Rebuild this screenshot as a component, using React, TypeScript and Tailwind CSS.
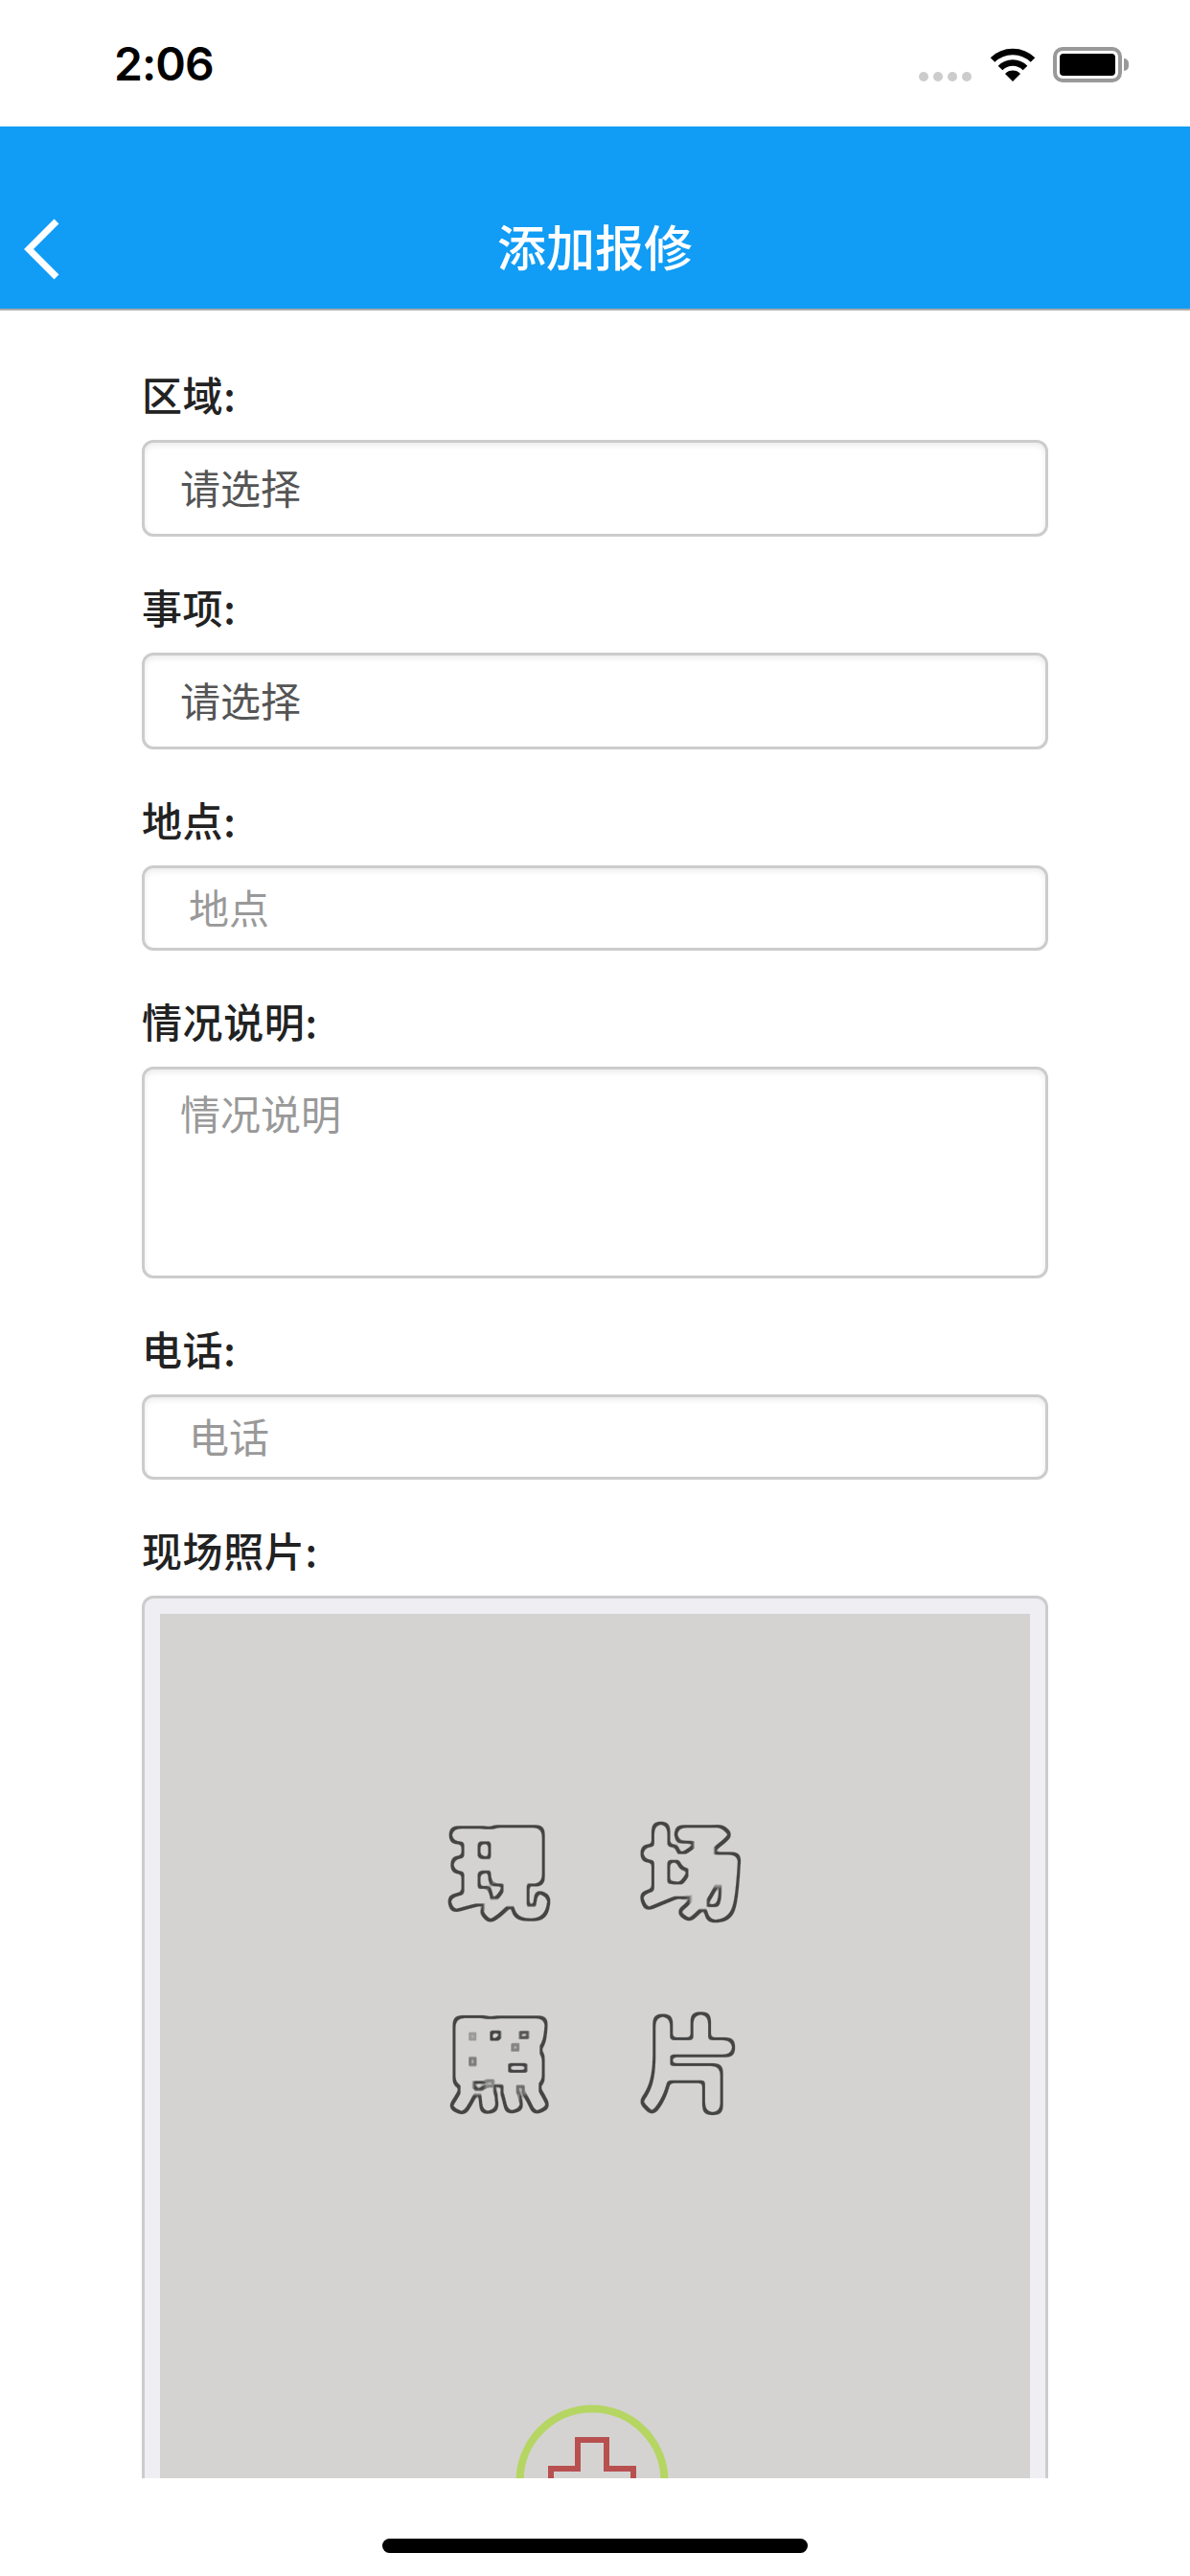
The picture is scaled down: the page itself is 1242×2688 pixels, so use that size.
import React from 'react'

const cjk = "font-['Noto_Sans_CJK_SC',sans-serif]"

function StatusBar() {
  return (
    <div className="h-[132px] flex items-start justify-between pl-[119px] pr-[64px] pt-[38px]">
      <span className="font-['Inter',sans-serif] text-[48px] leading-[58px] font-semibold text-black tracking-[-1px]">2:06</span>
      <div className="flex items-start pt-[11px]">
        <div className="flex gap-[5px] mt-[26px] mr-[19px]">
          <span className="w-[10px] h-[10px] rounded-full bg-[#cccccc]" />
          <span className="w-[10px] h-[10px] rounded-full bg-[#cccccc]" />
          <span className="w-[10px] h-[10px] rounded-full bg-[#cccccc]" />
          <span className="w-[10px] h-[10px] rounded-full bg-[#cccccc]" />
        </div>
        <svg width="48" height="36" viewBox="0 0 48 36" className="mr-[18px]">
          <path d="M3 13.5 A30 30 0 0 1 45 13.5" fill="none" stroke="#000" strokeWidth="6.5" />
          <path d="M11 22 A18 18 0 0 1 37 22" fill="none" stroke="#000" strokeWidth="6.5" />
          <path d="M16 28 A11 11 0 0 1 32 28 L24 36 Z" fill="#000" />
        </svg>
        <div className="w-[72px] h-[37px] rounded-[10px] border-[4px] border-[#999999] p-[3px]">
          <div className="w-full h-full rounded-[4px] bg-black" />
        </div>
        <div className="w-[5px] h-[13px] mt-[12px] ml-[2px] rounded-r-full bg-[#999999]" />
      </div>
    </div>
  )
}

function Header() {
  return (
    <div className="relative h-[192px] bg-[#119cf5] border-b-[2px] border-[#aaaaaa] flex items-end justify-center pb-[36px]">
      <svg width="40" height="64" viewBox="0 0 40 64" className="absolute left-[23px] top-[96px]">
        <path d="M36 3 L7 32 L36 61" fill="none" stroke="#fff" strokeWidth="7" />
      </svg>
      <h1 className={`${cjk} text-[51px] leading-[60px] font-medium text-white`}>添加报修</h1>
    </div>
  )
}

function Label({ text }: { text: string }) {
  return (
    <div className="h-[121px] flex items-end pb-[23px]">
      <span className={`${cjk} text-[42px] leading-[50px] font-medium tracking-[0.6px] text-[#222222]`}>{text}</span>
    </div>
  )
}

const boxClass = 'w-full border-[3px] border-[#cccccc] rounded-[12px] bg-white shadow-[inset_0_3px_6px_rgba(0,0,0,0.08)]'

function SelectField({ label }: { label: string }) {
  return (
    <div>
      <Label text={label} />
      <div className={`${boxClass} ${cjk} h-[101px] flex items-center pl-[37px] pb-[4px] text-[42px] text-[#555555]`}>请选择</div>
    </div>
  )
}

function TextField({ label, placeholder }: { label: string; placeholder: string }) {
  return (
    <div>
      <Label text={label} />
      <input
        placeholder={placeholder}
        className={`${boxClass} ${cjk} h-[89px] block pl-[46px] pb-[4px] text-[42px] placeholder:text-[#999999] outline-none`}
      />
    </div>
  )
}

function PhotoBox() {
  return (
    <div>
      <Label text="现场照片:" />
      <div className="border-[3px] border-[#cccccc] rounded-[12px] bg-[#eeeef3] p-[16px] pb-0">
        <div className="h-[1200px] bg-[#d4d3d2] flex flex-col items-center pt-[163px]">
          <svg width="0" height="0" className="absolute">
            <filter id="bubble" x="-25%" y="-25%" width="150%" height="150%" colorInterpolationFilters="sRGB">
              <feGaussianBlur in="SourceAlpha" stdDeviation="3" result="soft" />
              <feComponentTransfer in="soft" result="outer">
                <feFuncA type="linear" slope="14" intercept="-1.2" />
              </feComponentTransfer>
              <feMorphology in="outer" operator="erode" radius="3" result="inner" />
              <feComposite in="outer" in2="inner" operator="out" result="ring" />
              <feFlood floodColor="#444444" />
              <feComposite in2="ring" operator="in" />
            </filter>
          </svg>
          <div className={`${cjk} grid grid-cols-[200px_200px] auto-rows-[200px] place-items-center text-[106px] leading-none font-bold text-[#444444] [filter:url(#bubble)]`}>
            <span>现</span>
            <span>场</span>
            <span>照</span>
            <span>片</span>
          </div>
          <svg width="160" height="160" viewBox="0 0 160 160" className="mt-[262px] mr-[6px] shrink-0">
            <circle cx="80" cy="80" r="75.5" fill="none" stroke="#b5d662" strokeWidth="8" />
            <path d="M65 67 V37 H95 V67 H123 V93 H95 V123 H65 V93 H37 V67 Z" fill="none" stroke="#b85050" strokeWidth="6" />
          </svg>
        </div>
      </div>
    </div>
  )
}

export default function App() {
  return (
    <div className="w-[1242px] h-[2688px] bg-white flex flex-col overflow-hidden">
      <StatusBar />
      <Header />
      <div className="h-[2262px] overflow-hidden pl-[148px] pr-[148px] pt-[14px]">
        <SelectField label="区域:" />
        <SelectField label="事项:" />
        <TextField label="地点:" placeholder="地点" />
        <div>
          <Label text="情况说明:" />
          <textarea
            placeholder="情况说明"
            className={`${boxClass} ${cjk} h-[221px] block resize-none pl-[37px] pt-[20px] text-[42px] leading-[50px] placeholder:text-[#999999] outline-none`}
          />
        </div>
        <TextField label="电话:" placeholder="电话" />
        <PhotoBox />
      </div>
      <div className="flex-1 flex justify-center pt-[63px]">
        <div className="w-[444px] h-[15px] rounded-full bg-black" />
      </div>
    </div>
  )
}
